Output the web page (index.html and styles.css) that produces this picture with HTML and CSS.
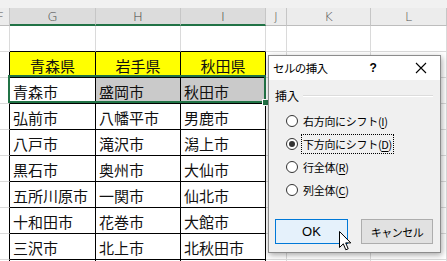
FILE: index.html
```html
<!DOCTYPE html>
<html lang="ja">
<head>
<meta charset="utf-8">
<link rel="stylesheet" href="styles.css">
</head>
<body>
<div class="sheet">
  <div class="topstrip"></div>
  <div class="grid">
    <div class="hd hd-f">F</div>
    <div class="hd sel">G</div>
    <div class="hd sel">H</div>
    <div class="hd sel">I</div>
    <div class="hd">J</div>
    <div class="hd">K</div>
    <div class="hd">L</div>

    <div class="c"></div><div class="c tbtop"></div><div class="c tbtop"></div><div class="c tbtop"></div><div class="c"></div><div class="c"></div><div class="c"></div>

    <div class="c tbleft"></div><div class="c tb yel">青森県</div><div class="c tb yel">岩手県</div><div class="c tb yel">秋田県</div><div class="c"></div><div class="c"></div><div class="c"></div>

    <div class="c tbleft"></div><div class="c tb">青森市</div><div class="c tb gry">盛岡市</div><div class="c tb gry">秋田市</div><div class="c"></div><div class="c"></div><div class="c"></div>

    <div class="c tbleft"></div><div class="c tb">弘前市</div><div class="c tb">八幡平市</div><div class="c tb">男鹿市</div><div class="c"></div><div class="c"></div><div class="c"></div>

    <div class="c tbleft"></div><div class="c tb">八戸市</div><div class="c tb">滝沢市</div><div class="c tb">潟上市</div><div class="c"></div><div class="c"></div><div class="c"></div>

    <div class="c tbleft"></div><div class="c tb">黒石市</div><div class="c tb">奥州市</div><div class="c tb">大仙市</div><div class="c"></div><div class="c"></div><div class="c"></div>

    <div class="c tbleft"></div><div class="c tb">五所川原市</div><div class="c tb">一関市</div><div class="c tb">仙北市</div><div class="c"></div><div class="c"></div><div class="c"></div>

    <div class="c tbleft"></div><div class="c tb">十和田市</div><div class="c tb">花巻市</div><div class="c tb">大館市</div><div class="c"></div><div class="c"></div><div class="c"></div>

    <div class="c tbleft"></div><div class="c tb">三沢市</div><div class="c tb">北上市</div><div class="c tb">北秋田市</div><div class="c"></div><div class="c"></div><div class="c"></div>

    <div class="c tbleft"></div><div class="c tb"></div><div class="c tb"></div><div class="c tb"></div><div class="c"></div><div class="c"></div><div class="c"></div>
  </div>

  <div class="selection"><span class="handle"></span></div>

  <div class="dialog">
    <div class="titlebar">
      <span class="title">セルの挿入</span>
      <span class="help">?</span>
      <svg class="close" width="12" height="12" viewBox="0 0 12 12"><path d="M1 1L11 11M11 1L1 11" stroke="#000" stroke-width="1.1" fill="none"/></svg>
    </div>
    <div class="body">
      <div class="legend"><span>挿入</span><span class="rule"></span></div>
      <div class="radios">
        <div class="radio"><span class="circle"></span><span class="lbl">右方向にシフト(<u>I</u>)</span></div>
        <div class="radio"><span class="circle on"></span><span class="lbl focus">下方向にシフト(<u>D</u>)</span></div>
        <div class="radio"><span class="circle"></span><span class="lbl">行全体(<u>R</u>)</span></div>
        <div class="radio"><span class="circle"></span><span class="lbl">列全体(<u>C</u>)</span></div>
      </div>
      <div class="buttons">
        <div class="btn primary">OK</div>
        <div class="btn">キャンセル</div>
      </div>
    </div>
  </div>

  <svg class="cursor" width="13" height="20" viewBox="0 0 13 20"><path d="M0.5 0.5L0.5 16.5L4.3 12.8L6.8 18.8L9.2 17.8L6.7 11.9L11.8 11.9Z" fill="#fff" stroke="#000" stroke-width="1" stroke-linejoin="round"/></svg>
</div>
</body>
</html>
```

FILE: styles.css
```css
html, body {
  margin: 0;
  padding: 0;
  background: #ffffff;
}
.sheet {
  position: relative;
  width: 447px;
  height: 261px;
  overflow: hidden;
  font-family: "Noto Sans CJK JP", "Noto Sans", sans-serif;
}
.topstrip {
  height: 8px;
  background: #f1f1f1;
}
.grid {
  display: grid;
  grid-template-columns: 10px 86px 85px 85px 21px 84px 1fr;
  grid-template-rows: 18px repeat(10, 26px);
}
.hd {
  box-sizing: border-box;
  background: #ececec;
  border-right: 1px solid #c6c6c6;
  border-bottom: 1px solid #bdbdbd;
  display: flex;
  align-items: center;
  justify-content: center;
  font-family: "DejaVu Sans", sans-serif;
  font-weight: 300;
  font-size: 13px;
  color: #555;
  overflow: hidden;
}
.hd-f {
  justify-content: flex-end;
  padding-right: 5px;
}
.hd.sel {
  background: #dcdcdc;
  border-bottom: 2px solid #217346;
  color: #444;
}
.c {
  box-sizing: border-box;
  border-right: 1px solid #dadada;
  border-bottom: 1px solid #dadada;
  display: flex;
  align-items: center;
  padding: 1px 0 0 3px;
  font-size: 15px;
  color: #111;
  white-space: nowrap;
  overflow: hidden;
}
.tbtop {
  border-bottom-color: #000;
}
.tbleft {
  border-right-color: #000;
}
.tb {
  border-right-color: #000;
  border-bottom-color: #000;
}
.yel {
  background: #ffff00;
  justify-content: center;
  padding-left: 0;
}
.gry {
  background: #cacaca;
}
.selection {
  position: absolute;
  left: 8px;
  top: 75px;
  width: 258px;
  height: 28px;
  box-sizing: border-box;
  border: 2px solid #217346;
}
.handle {
  position: absolute;
  right: -5px;
  bottom: -5px;
  width: 5px;
  height: 5px;
  background: #217346;
  border: 1px solid #fff;
}
.dialog {
  position: absolute;
  left: 268px;
  top: 55px;
  width: 173px;
  height: 198px;
  box-sizing: border-box;
  border: 1px solid #8c8c8c;
  background: #f0f0f0;
  box-shadow: 1px 2px 6px rgba(0, 0, 0, 0.35);
  display: flex;
  flex-direction: column;
}
.titlebar {
  height: 24px;
  background: #ffffff;
  display: flex;
  align-items: center;
  font-size: 11.5px;
  color: #000;
  padding-left: 4px;
}
.title {
  letter-spacing: -0.6px;
}
.help {
  margin-left: 42px;
  font-family: "Liberation Sans", sans-serif;
  font-size: 12px;
  font-weight: bold;
}
.close {
  margin-left: 38px;
}
.body {
  flex: 1;
  display: flex;
  flex-direction: column;
  padding: 6px 7px 8px 6px;
  font-size: 11px;
  color: #000;
}
.legend {
  height: 18px;
  display: flex;
  align-items: center;
  gap: 4px;
  font-size: 12px;
}
.rule {
  flex: 1;
  height: 0;
  border-top: 1px solid #dcdcdc;
  border-bottom: 1px solid #ffffff;
  margin-top: 2px;
}
.radios {
  margin-top: 5px;
  margin-left: 11px;
  display: flex;
  flex-direction: column;
}
.radio {
  height: 23px;
  display: flex;
  align-items: center;
  gap: 3px;
}
.circle {
  box-sizing: border-box;
  width: 12px;
  height: 12px;
  border-radius: 50%;
  border: 1px solid #333;
  background: #fff;
  display: flex;
  align-items: center;
  justify-content: center;
}
.circle.on::after {
  content: "";
  width: 6px;
  height: 6px;
  border-radius: 50%;
  background: #333;
}
.lbl {
  letter-spacing: -0.3px;
  padding: 1px 1px;
  border: 1px dotted transparent;
}
.lbl.focus {
  border-color: #000;
}
.lbl u {
  text-decoration-thickness: 1px;
  text-underline-offset: 2px;
}
.buttons {
  margin-top: auto;
  display: flex;
  justify-content: space-between;
}
.btn {
  box-sizing: border-box;
  width: 72px;
  height: 25px;
  border: 1px solid #adadad;
  background: #e1e1e1;
  display: flex;
  align-items: center;
  justify-content: center;
  font-size: 11px;
  letter-spacing: -0.5px;
}
.btn.primary {
  width: 73px;
  border-color: #0078d7;
  background: #e5f1fb;
  font-family: "Liberation Sans", sans-serif;
  font-size: 13px;
  letter-spacing: 0;
}
.cursor {
  position: absolute;
  left: 339px;
  top: 231px;
}
```
